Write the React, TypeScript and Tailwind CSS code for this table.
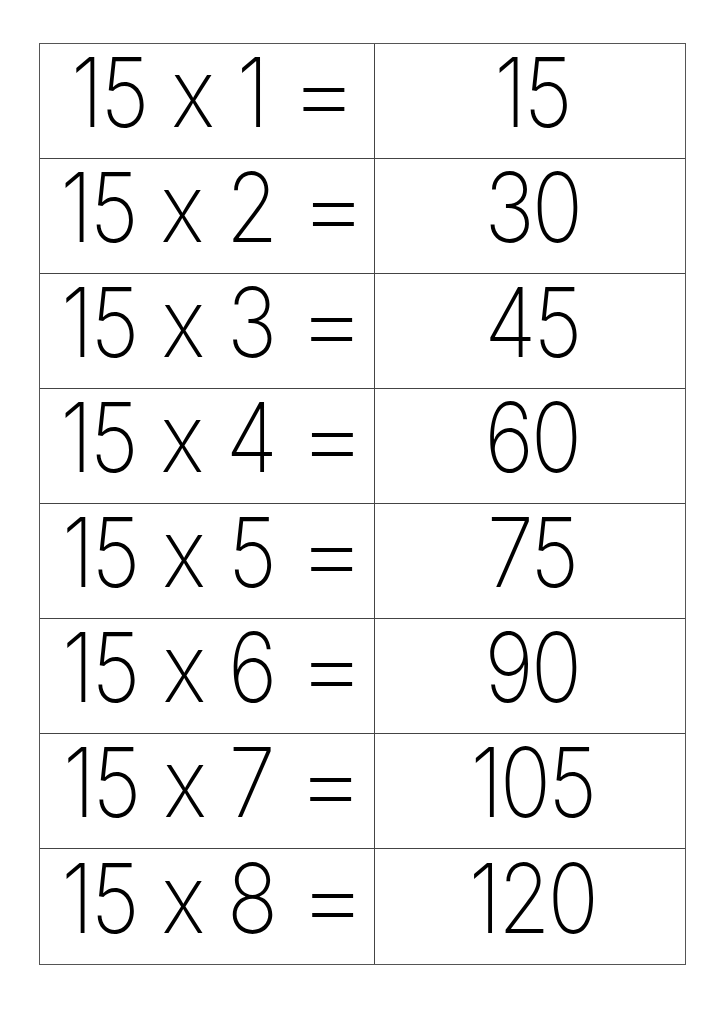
import React from "react";

const rows = [
  ["1", "15"],
  ["2", "30"],
  ["3", "45"],
  ["4", "60"],
  ["5", "75"],
  ["6", "90"],
  ["7", "105"],
  ["8", "120"],
];

export default function App() {
  return (
    <div className="w-[724px] h-[1024px] bg-white pt-[43px] pl-[39px]" style={{ fontFamily: "Inter, 'Liberation Sans', sans-serif" }}>
      <div className="w-[647px] border border-[#555]">
        {rows.map(([n, r], i) => (
          <div key={n} className={`flex h-[115px] ${i < rows.length - 1 ? "border-b border-[#444]" : ""}`}>
            <div className="w-[335px] border-r border-[#444] flex items-center justify-center pb-[18px] pl-[4px]">
              <div className="flex items-baseline gap-[28px] whitespace-nowrap text-[96px] leading-none font-extralight text-black [font-feature-settings:'calt'_0] tracking-[-3px] scale-x-[0.88]">
                <span>15</span>
                <span>x</span>
                <span>{n}</span>
                <span className="inline-block scale-x-[1.3] ml-[6px]">=</span>
              </div>
            </div>
            <div className="flex-1 flex items-center justify-center pb-[18px] pl-[4px]">
              <span className="whitespace-nowrap text-[96px] leading-none font-extralight text-black tracking-[-3px] scale-x-[0.88]">{r}</span>
            </div>
          </div>
        ))}
      </div>
    </div>
  );
}
